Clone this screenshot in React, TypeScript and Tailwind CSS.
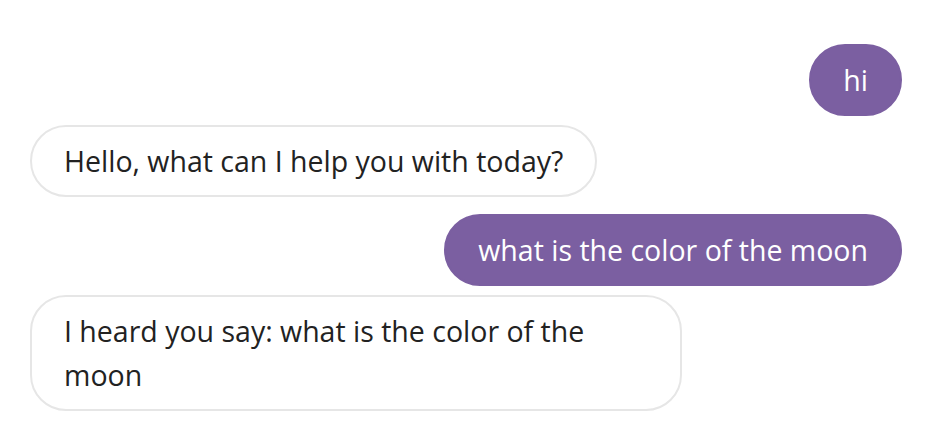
import React from "react";

const msgs: { from: "user" | "bot"; text: string; mt: string }[] = [
  { from: "user", text: "hi", mt: "mt-0" },
  { from: "bot", text: "Hello, what can I help you with today?", mt: "mt-[9px]" },
  { from: "user", text: "what is the color of the moon", mt: "mt-[17px]" },
  { from: "bot", text: "I heard you say: what is the color of the moon", mt: "mt-[9px]" },
];

export default function App() {
  return (
    <div
      className="w-[932px] h-[440px] bg-white overflow-hidden flex flex-col px-[30px] pt-[44px]"
      style={{ fontFamily: "'Open Sans', sans-serif" }}
    >
      {msgs.map((m, i) =>
        m.from === "user" ? (
          <div key={i} className={`flex justify-end ${m.mt}`}>
            <div className="max-w-[652px] rounded-[36px] bg-[#7b5fa1] border-2 border-[#7b5fa1] px-[32px] py-[12px] text-[28.5px] leading-[44px] text-white">
              {m.text}
            </div>
          </div>
        ) : (
          <div key={i} className={`flex justify-start ${m.mt}`}>
            <div className="max-w-[652px] rounded-[36px] bg-white border-2 border-[#e6e6e6] px-[32px] py-[12px] text-[28.5px] leading-[44px] text-[#222222]">
              {m.text}
            </div>
          </div>
        )
      )}
    </div>
  );
}
